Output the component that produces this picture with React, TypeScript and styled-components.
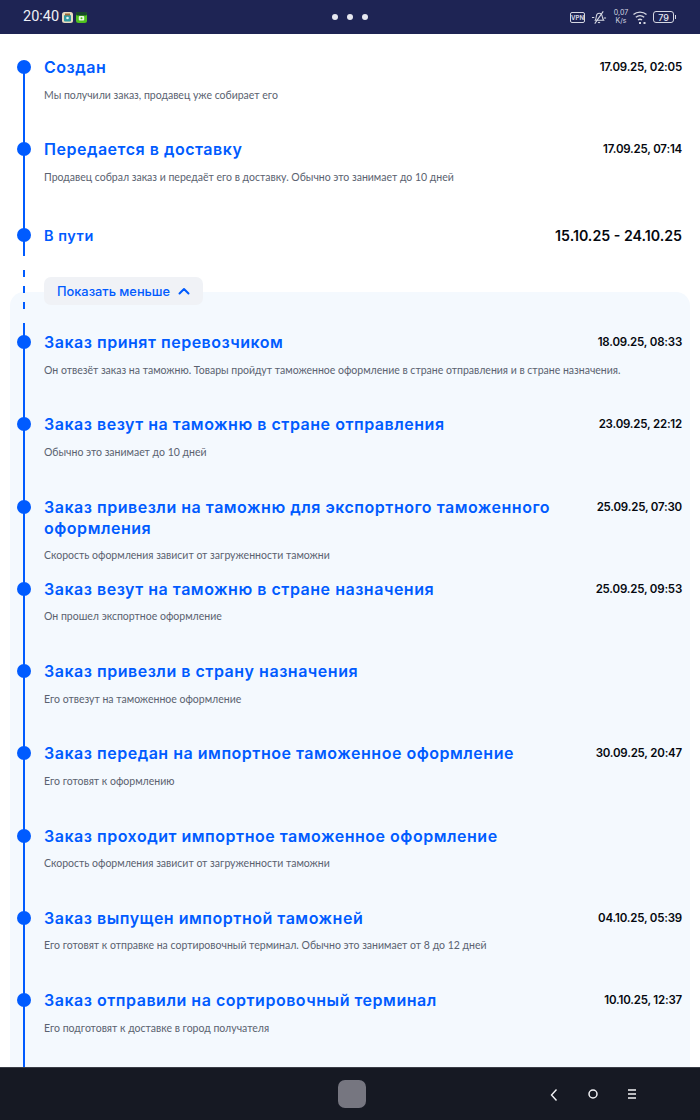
import React from "react";
import styled, { createGlobalStyle } from "styled-components";

const steps = [
  {
    title: "Заказ принят перевозчиком",
    date: "18.09.25, 08:33",
    text: "Он отвезёт заказ на таможню. Товары пройдут таможенное оформление в стране отправления и в стране назначения.",
  },
  {
    title: "Заказ везут на таможню в стране отправления",
    date: "23.09.25, 22:12",
    text: "Обычно это занимает до 10 дней",
  },
  {
    title: "Заказ привезли на таможню для экспортного таможенного оформления",
    date: "25.09.25, 07:30",
    text: "Скорость оформления зависит от загруженности таможни",
  },
  {
    title: "Заказ везут на таможню в стране назначения",
    date: "25.09.25, 09:53",
    text: "Он прошел экспортное оформление",
  },
  {
    title: "Заказ привезли в страну назначения",
    date: "",
    text: "Его отвезут на таможенное оформление",
  },
  {
    title: "Заказ передан на импортное таможенное оформление",
    date: "30.09.25, 20:47",
    text: "Его готовят к оформлению",
  },
  {
    title: "Заказ проходит импортное таможенное оформление",
    date: "",
    text: "Скорость оформления зависит от загруженности таможни",
  },
  {
    title: "Заказ выпущен импортной таможней",
    date: "04.10.25, 05:39",
    text: "Его готовят к отправке на сортировочный терминал. Обычно это занимает от 8 до 12 дней",
  },
  {
    title: "Заказ отправили на сортировочный терминал",
    date: "10.10.25, 12:37",
    text: "Его подготовят к доставке в город получателя",
  },
];

const App = () => {
  return (
    <Screen>
      <GlobalStyle />
      <StatusBar>
        <StatusLeft>
          <Time>20:40</Time>
          <AppIcon viewBox="0 0 11 11">
            <rect width="11" height="11" rx="2.5" fill="#e8dcc0" />
            <rect x="2" y="3" width="7" height="6.5" rx="1" fill="#2f9aa0" />
            <path d="M3 1.5h5v2H3z" fill="#9a6a3a" />
            <circle cx="5.5" cy="6" r="1.3" fill="#e8f4f4" />
          </AppIcon>
          <AppIcon viewBox="0 0 11 11">
            <rect width="11" height="11" rx="2.5" fill="#4fc21e" />
            <rect width="11" height="3.5" rx="1.5" fill="#17482a" />
            <rect x="2.8" y="4" width="5.4" height="4.6" rx="1" fill="#eef8e8" />
            <circle cx="5.5" cy="6.3" r="1" fill="#4fc21e" />
          </AppIcon>
        </StatusLeft>
        <Dots>
          <i />
          <i />
          <i />
        </Dots>
        <StatusRight>
          <VpnBadge>VPN</VpnBadge>
          <svg width="16" height="17" viewBox="0 0 17 17" fill="none" stroke="#d5d7e2" strokeWidth="1.1">
            <path d="M4.500 11.500c1-1.500 1-3 1.200-4.500C6 5 7.500 4 8.800 4c1.500 0 2.700 1.200 3 2.700.3 1.800.5 3.300 1.700 4.800z" />
            <path d="M1 8.500h2.500M13.500 9h2.500M7.500 13.500c.6.700 1.500.7 2.100 0M13 2 4 15" />
          </svg>
          <Speed>
            <span>0,07</span>
            <span>K/s</span>
          </Speed>
          <svg width="16" height="15" viewBox="0 0 16 15" fill="none" stroke="#d5d7e2" strokeWidth="1.4">
            <path d="M1.500 4.500C5 1.300 11 1.300 14.500 4.500M3.800 7.300C6.300 5.300 9.700 5.300 12.200 7.300M6 10c1.200-.9 2.800-.9 4 0" />
            <path d="M7 13h2M11.500 13h2" strokeWidth="2" />
          </svg>
          <Battery>
            <b>79</b>
          </Battery>
        </StatusRight>
      </StatusBar>
      <Main>
        <Row $height="82px">
          <Dot />
          <RowHead>
            <Title>Создан</Title>
            <DateText>17.09.25, 02:05</DateText>
          </RowHead>
          <Description>Мы получили заказ, продавец уже собирает его</Description>
        </Row>
        <Row $height="86px">
          <Dot />
          <RowHead>
            <Title>Передается в доставку</Title>
            <DateText>17.09.25, 07:14</DateText>
          </RowHead>
          <Description>Продавец собрал заказ и передаёт его в доставку. Обычно это занимает до 10 дней</Description>
        </Row>
        <Row $height="34px">
          <Dot />
          <RowHead>
            <SmallTitle>В пути</SmallTitle>
            <BigDate>15.10.25 - 24.10.25</BigDate>
          </RowHead>
        </Row>
        <ToggleRow>
          <Connector />
          <ToggleButton>
            Показать меньше
            <svg width="14" height="14" viewBox="0 0 14 14" fill="none" stroke="#005bff" strokeWidth="2" strokeLinecap="round" strokeLinejoin="round">
              <path d="M2.500 9.500 7 5l4.500 4.500" />
            </svg>
          </ToggleButton>
        </ToggleRow>
        <Panel>
          {steps.map((step) => (
            <Row key={step.title} $height="82.25px">
              <Dot />
              <RowHead>
                <Title>{step.title}</Title>
                <DateText>{step.date}</DateText>
              </RowHead>
              <Description>{step.text}</Description>
            </Row>
          ))}
        </Panel>
      </Main>
      <NavBar>
        <HomeKey />
        <NavIcons>
          <svg width="12" height="14" viewBox="0 0 12 14" fill="none" stroke="#f2f2f5" strokeWidth="1.400">
            <path d="M8.500 1.500 3.500 7l5 5.500" />
          </svg>
          <svg width="12" height="12" viewBox="0 0 12 12" fill="none" stroke="#f2f2f5" strokeWidth="1.500">
            <circle cx="6" cy="6" r="4" />
          </svg>
          <svg width="12" height="12" viewBox="0 0 12 12" fill="none" stroke="#f2f2f5" strokeWidth="1.400">
            <path d="M2 2h8M2 6h8M2 10h8" />
          </svg>
        </NavIcons>
      </NavBar>
    </Screen>
  );
};

export default App;

const GlobalStyle = createGlobalStyle`
  html, body {
    margin: 0;
    padding: 0;
    background: #ffffff;
  }
  * {
    box-sizing: border-box;
  }
`;

const Screen = styled.div`
  display: flex;
  flex-direction: column;
  width: 700px;
  height: 1120px;
  overflow: hidden;
  font-family: "Inter", "Liberation Sans", sans-serif;
`;

const StatusBar = styled.div`
  display: grid;
  grid-template-columns: 1fr auto 1fr;
  align-items: center;
  flex: none;
  height: 34px;
  padding: 0 26px 0 23px;
  background: #1e2454;
`;

const StatusLeft = styled.div`
  display: flex;
  align-items: center;
  gap: 3px;
`;

const Time = styled.span`
  color: #eef0f6;
  font-family: "Roboto", sans-serif;
  font-size: 14.5px;
  line-height: 18px;
`;

const AppIcon = styled.svg`
  width: 11px;
  height: 11px;
`;

const Dots = styled.div`
  display: flex;
  gap: 9px;
  margin-left: 3px;
  & i {
    width: 6px;
    height: 6px;
    border-radius: 50%;
    background: #e6e7f0;
  }
`;

const StatusRight = styled.div`
  display: flex;
  align-items: center;
  justify-content: flex-end;
  gap: 5px;
`;

const VpnBadge = styled.span`
  width: 15px;
  height: 11px;
  margin-right: 1px;
  border: 1px solid #d5d7e2;
  border-radius: 2px;
  color: #d5d7e2;
  font-size: 6px;
  font-weight: 700;
  line-height: 9px;
  text-align: center;
`;

const Speed = styled.div`
  display: flex;
  flex-direction: column;
  align-items: center;
  width: 14px;
  margin: 0 -1px 0 2px;
  color: #d5d7e2;
  font-size: 7px;
  line-height: 8px;
`;

const Battery = styled.div`
  position: relative;
  display: flex;
  align-items: center;
  justify-content: center;
  width: 21px;
  height: 12px;
  border: 1px solid #d5d7e2;
  border-radius: 3px;
  & b {
    color: #e4e6ee;
    font-size: 9px;
    font-weight: 500;
  }
  &::after {
    content: "";
    position: absolute;
    right: -3px;
    top: 3px;
    width: 1px;
    height: 4px;
    background: #d5d7e2;
  }
`;

const Main = styled.div`
  display: flex;
  flex: 1;
  flex-direction: column;
  min-height: 0;
  padding-top: 20px;
  overflow: hidden;
  background: #ffffff;
`;

const Row = styled.div<{ $height: string }>`
  position: relative;
  flex: none;
  height: ${(props) => props.$height};
  padding: 3px 18px 0 44px;
  &::before {
    content: "";
    position: absolute;
    left: 23px;
    top: 0;
    bottom: 0;
    width: 2px;
    background: #005bff;
  }
  &:first-child::before {
    top: 13px;
  }
`;

const Dot = styled.span`
  position: absolute;
  left: 17px;
  top: 6px;
  width: 14px;
  height: 14px;
  border-radius: 50%;
  background: #005bff;
`;

const RowHead = styled.div`
  display: flex;
  align-items: flex-start;
  justify-content: space-between;
  gap: 40px;
`;

const Title = styled.div`
  color: #005bff;
  font-size: 16px;
  font-weight: 600;
  line-height: 21px;
  letter-spacing: 0.52px;
`;

const SmallTitle = styled(Title)`
  font-size: 14.5px;
`;

const DateText = styled.div`
  flex: none;
  color: #05080f;
  font-size: 11.5px;
  font-weight: 600;
  line-height: 21px;
  letter-spacing: -0.2px;
`;

const BigDate = styled(DateText)`
  font-size: 14.2px;
  letter-spacing: 0;
`;

const Description = styled.div`
  margin-top: 9.5px;
  color: #5a6270;
  font-family: "Lato", "Inter", sans-serif;
  font-size: 10.5px;
  line-height: 14px;
`;

const ToggleRow = styled.div`
  position: relative;
  z-index: 1;
  flex: none;
  height: 49px;
  padding: 21px 0 0 44px;
`;

const Connector = styled.span`
  position: absolute;
  left: 23px;
  top: 14px;
  width: 2px;
  height: 40px;
  background: repeating-linear-gradient(to bottom, #005bff 0 7px, transparent 7px 16px);
`;

const ToggleButton = styled.button`
  display: flex;
  align-items: center;
  gap: 7px;
  width: 159px;
  height: 28px;
  padding: 0 0 0 13px;
  border: 0;
  border-radius: 7px;
  background: #f0f2f6;
  color: #005bff;
  font-family: inherit;
  font-size: 12.8px;
  font-weight: 500;
`;

const Panel = styled.div`
  flex: 1;
  margin: -13px 10px 0;
  padding-top: 37px;
  border-radius: 14px 14px 0 0;
  background: #f4f9fe;
  & ${Row} {
    margin-left: -10px;
    padding-right: 8px;
    padding-left: 44px;
  }
  & ${Row}:first-child::before {
    top: -6px;
  }
`;

const NavBar = styled.div`
  position: relative;
  display: flex;
  align-items: center;
  justify-content: center;
  flex: none;
  height: 53px;
  border-top: 1px solid #3a3d47;
  background: #161923;
`;

const HomeKey = styled.div`
  width: 28px;
  height: 28px;
  margin-left: 4px;
  border-radius: 7px;
  background: #767680;
`;

const NavIcons = styled.div`
  position: absolute;
  right: 62px;
  top: 20px;
  display: flex;
  gap: 27px;
`;
